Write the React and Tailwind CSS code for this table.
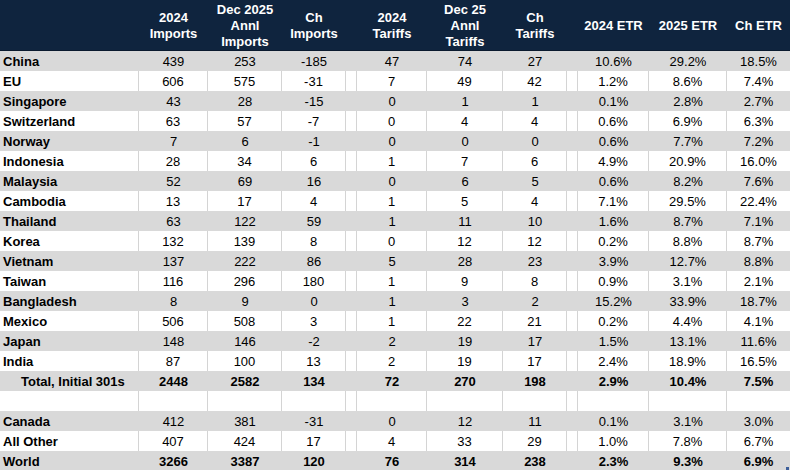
import React from "react";

const widths = ["w-[139px]", "w-[69px]", "w-[74px]", "w-[64px]", "w-[11px]", "w-[70px]", "w-[76px]", "w-[64px]", "w-[11px]", "w-[71px]", "w-[78px]", "w-[63px]"];

const headers = [
  [],
  ["2024", "Imports"],
  ["Dec 2025", "Annl", "Imports"],
  ["Ch", "Imports"],
  null,
  ["2024", "Tariffs"],
  ["Dec 25", "Annl", "Tariffs"],
  ["Ch", "Tariffs"],
  null,
  ["2024 ETR"],
  ["2025 ETR"],
  ["Ch ETR"],
];

const rows = [
  ["China", "439", "253", "-185", "47", "74", "27", "10.6%", "29.2%", "18.5%"],
  ["EU", "606", "575", "-31", "7", "49", "42", "1.2%", "8.6%", "7.4%"],
  ["Singapore", "43", "28", "-15", "0", "1", "1", "0.1%", "2.8%", "2.7%"],
  ["Switzerland", "63", "57", "-7", "0", "4", "4", "0.6%", "6.9%", "6.3%"],
  ["Norway", "7", "6", "-1", "0", "0", "0", "0.6%", "7.7%", "7.2%"],
  ["Indonesia", "28", "34", "6", "1", "7", "6", "4.9%", "20.9%", "16.0%"],
  ["Malaysia", "52", "69", "16", "0", "6", "5", "0.6%", "8.2%", "7.6%"],
  ["Cambodia", "13", "17", "4", "1", "5", "4", "7.1%", "29.5%", "22.4%"],
  ["Thailand", "63", "122", "59", "1", "11", "10", "1.6%", "8.7%", "7.1%"],
  ["Korea", "132", "139", "8", "0", "12", "12", "0.2%", "8.8%", "8.7%"],
  ["Vietnam", "137", "222", "86", "5", "28", "23", "3.9%", "12.7%", "8.8%"],
  ["Taiwan", "116", "296", "180", "1", "9", "8", "0.9%", "3.1%", "2.1%"],
  ["Bangladesh", "8", "9", "0", "1", "3", "2", "15.2%", "33.9%", "18.7%"],
  ["Mexico", "506", "508", "3", "1", "22", "21", "0.2%", "4.4%", "4.1%"],
  ["Japan", "148", "146", "-2", "2", "19", "17", "1.5%", "13.1%", "11.6%"],
  ["India", "87", "100", "13", "2", "19", "17", "2.4%", "18.9%", "16.5%"],
  ["Total, Initial 301s", "2448", "2582", "134", "72", "270", "198", "2.9%", "10.4%", "7.5%", "total"],
  ["", "", "", "", "", "", "", "", "", "", "blank"],
  ["Canada", "412", "381", "-31", "0", "12", "11", "0.1%", "3.1%", "3.0%"],
  ["All Other", "407", "424", "17", "4", "33", "29", "1.0%", "7.8%", "6.7%"],
  ["World", "3266", "3387", "120", "76", "314", "238", "2.3%", "9.3%", "6.9%", "total"],
];

function toCells(r) {
  return [r[0], r[1], r[2], r[3], "", r[4], r[5], r[6], "", r[7], r[8], r[9]];
}

export default function App() {
  return (
    <div
      className="relative w-[790px] h-[470px] overflow-hidden bg-white text-black text-[13px]"
      style={{ fontFamily: '"Liberation Sans", Arial, sans-serif' }}
    >
      <div className="flex h-[51px] bg-[#0f243e] border-b border-[#0a1a2e] text-white font-bold leading-[16px]">
        {headers.map((h, i) => (
          <div key={i} className={`${widths[i]} shrink-0 h-[50px] pt-[2px] flex flex-col items-center justify-center text-center`}>
            {h && h.map((line, j) => (
              <div key={j} className="whitespace-nowrap">{line}</div>
            ))}
          </div>
        ))}
      </div>
      {rows.map((r, idx) => {
        const gray = idx % 2 === 0;
        const kind = r[10];
        const bold = kind === "total";
        const cells = toCells(r);
        return (
          <div key={idx} className={`flex h-[20px] ${gray ? "bg-[#d9d9d9]" : "bg-white"}`}>
            {cells.map((c, i) => (
              <div
                key={i}
                className={`${widths[i]} shrink-0 h-[20px] pt-[2px] leading-[18px] whitespace-nowrap ${
                  !gray && i < 11 ? "border-r border-[#d4d4d4]" : ""
                } ${i === 0 ? (kind === "total" && idx === 16 ? "pl-[21px] font-bold" : "pl-[3px] font-bold") : "text-center"} ${
                  bold ? "font-bold" : ""
                }`}
              >
                {c}
              </div>
            ))}
          </div>
        );
      })}
      <div className="absolute right-[1px] bottom-0 w-[3px] h-[3px] bg-[#3d5f9a]" />
    </div>
  );
}
